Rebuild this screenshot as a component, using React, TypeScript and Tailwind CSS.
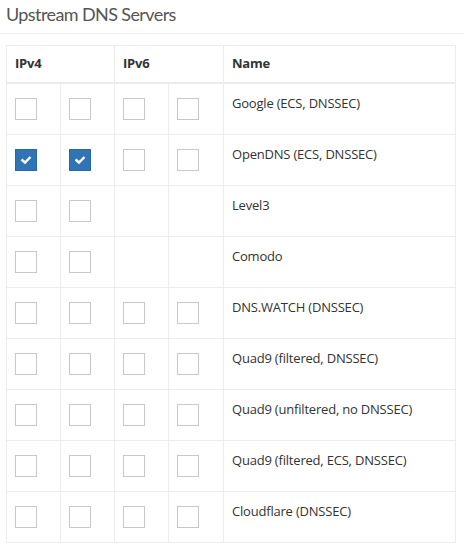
import React from 'react';

type Row = { name: string; v4: [boolean, boolean]; v6: [boolean, boolean] | null };

const rows: Row[] = [
    { name: 'Google (ECS, DNSSEC)', v4: [false, false], v6: [false, false] },
    { name: 'OpenDNS (ECS, DNSSEC)', v4: [true, true], v6: [false, false] },
    { name: 'Level3', v4: [false, false], v6: null },
    { name: 'Comodo', v4: [false, false], v6: null },
    { name: 'DNS.WATCH (DNSSEC)', v4: [false, false], v6: [false, false] },
    { name: 'Quad9 (filtered, DNSSEC)', v4: [false, false], v6: [false, false] },
    { name: 'Quad9 (unfiltered, no DNSSEC)', v4: [false, false], v6: [false, false] },
    { name: 'Quad9 (filtered, ECS, DNSSEC)', v4: [false, false], v6: [false, false] },
    { name: 'Cloudflare (DNSSEC)', v4: [false, false], v6: [false, false] },
];

const Box = ({ checked }: { checked: boolean }) =>
    checked ? (
        <div className="w-[22px] h-[22px] bg-[#3174b5] border border-[#2b679f] flex items-center justify-center">
            <svg width="12" height="10" viewBox="0 0 12 10">
                <path d="M1.5 4.5 L5 7.5 L10.5 2" stroke="white" strokeWidth="2.4" fill="none" />
            </svg>
        </div>
    ) : (
        <div className="w-[22px] h-[22px] bg-white border border-[#c8c8c8]" />
    );

const Cell = ({ children }: { children?: React.ReactNode }) => (
    <td className="border border-[#ececec] align-top px-[8px] pt-[14px] pb-[14px]">
        {children}
    </td>
);

export default function App() {
    return (
        <div className="w-[464px] h-[551px] bg-white text-[#333] font-['Open_Sans',sans-serif]">
            <div className="px-[6px] pt-[2px] h-[34px] text-[18px] tracking-[-0.6px] text-[#555] border-b border-[#eeeeee] leading-[24px] font-['Lato',sans-serif]">
                Upstream DNS Servers
            </div>
            <div className="pt-[11px] pl-[6px]">
                <table className="border-collapse w-[450px] table-fixed text-[13px] tracking-[-0.2px]">
                    <colgroup>
                        <col className="w-[54px]" />
                        <col className="w-[54px]" />
                        <col className="w-[54px]" />
                        <col className="w-[55px]" />
                        <col />
                    </colgroup>
                    <thead>
                        <tr className="h-[37px]">
                            <th colSpan={2} className="border border-[#ececec] border-b-2 text-left px-[8px] font-bold">IPv4</th>
                            <th colSpan={2} className="border border-[#ececec] border-b-2 text-left px-[8px] font-bold">IPv6</th>
                            <th className="border border-[#ececec] border-b-2 text-left px-[8px] font-bold">Name</th>
                        </tr>
                    </thead>
                    <tbody>
                        {rows.map((r) => (
                            <tr key={r.name} className="h-[51px]">
                                <Cell><Box checked={r.v4[0]} /></Cell>
                                <Cell><Box checked={r.v4[1]} /></Cell>
                                <Cell>{r.v6 && <Box checked={r.v6[0]} />}</Cell>
                                <Cell>{r.v6 && <Box checked={r.v6[1]} />}</Cell>
                                <td className="border border-[#ececec] align-top px-[8px] pt-[9px] leading-[20px]">{r.name}</td>
                            </tr>
                        ))}
                    </tbody>
                </table>
            </div>
        </div>
    );
}
